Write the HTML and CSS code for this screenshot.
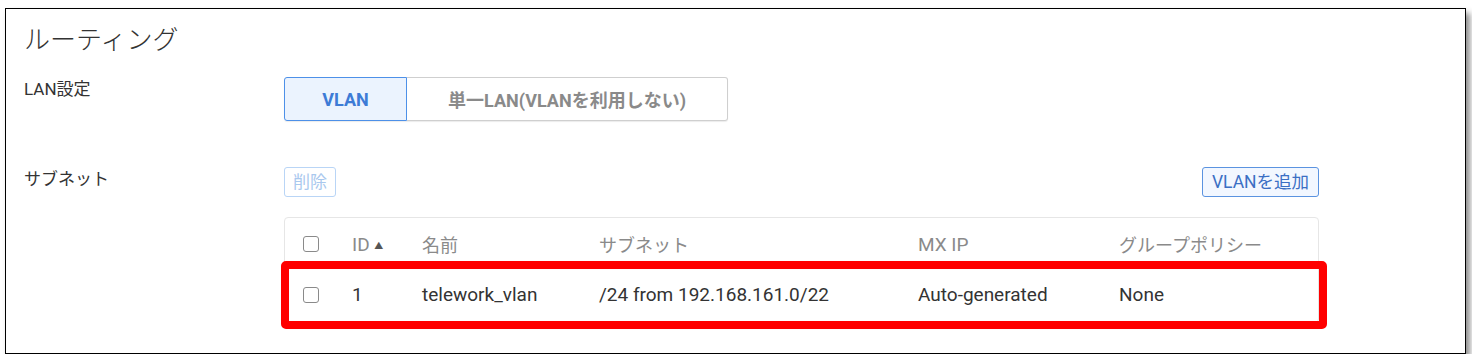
FILE: index.html
```html
<!DOCTYPE html>
<html lang="ja">
<head>
<meta charset="utf-8">
<title>ルーティング</title>
<link rel="stylesheet" href="styles.css">
</head>
<body>
<div class="frame">
  <h1 class="title">ルーティング</h1>
  <div class="form">
    <div class="label">LAN設定</div>
    <div class="field">
      <div class="toggle">
        <button class="seg seg-active">VLAN</button>
        <button class="seg seg-off">単一LAN(VLANを利用しない)</button>
      </div>
    </div>

    <div class="label label-subnet">サブネット</div>
    <div class="field field-subnet">
      <div class="actions">
        <button class="btn btn-disabled">削除</button>
        <button class="btn btn-add">VLANを追加</button>
      </div>
      <div class="table">
        <div class="row head">
          <span class="cb"></span>
          <span>ID <span class="sort">▲</span></span>
          <span class="jp">名前</span>
          <span class="jp">サブネット</span>
          <span>MX IP</span>
          <span class="jp">グループポリシー</span>
        </div>
        <div class="row data">
          <span class="cb"></span>
          <span>1</span>
          <span>telework_vlan</span>
          <span>/24 from 192.168.161.0/22</span>
          <span>Auto-generated</span>
          <span>None</span>
        </div>
        <div class="highlight"></div>
      </div>
    </div>
  </div>
</div>
</body>
</html>
```

FILE: styles.css
```css
* { box-sizing: border-box; }

html, body {
  margin: 0;
  padding: 0;
  background: #ffffff;
}

body {
  font-family: "Roboto", "Noto Sans CJK JP", sans-serif;
  color: #333333;
}

.frame {
  margin: 8px 0 0 5px;
  width: 1461px;
  height: 346px;
  border: 1px solid #000000;
  background: #ffffff;
  box-shadow: 4px 5px 6px rgba(0, 0, 0, 0.45);
  padding: 11px 0 0 18px;
}

.title {
  margin: 0;
  font-family: "Noto Sans CJK JP", sans-serif;
  font-weight: 300;
  font-size: 26px;
  line-height: 36px;
  color: #333333;
}

.form {
  margin-top: 21px;
  display: grid;
  grid-template-columns: 260px 1035px;
  row-gap: 46px;
}

.label {
  font-size: 17px;
  line-height: 24px;
  color: #333333;
}

.label-subnet {
  margin-top: 0;
}

.toggle {
  display: inline-flex;
  height: 44px;
  border-radius: 3px;
  box-shadow: 0 1px 1px rgba(0, 0, 0, 0.08);
}

.seg {
  font-family: "Roboto", "Noto Sans CJK JP", sans-serif;
  font-weight: 700;
  font-size: 18px;
  height: 44px;
  margin: 0;
  cursor: pointer;
}

.seg-active {
  width: 123px;
  background: #ebf3fe;
  border: 1.5px solid #4d90e8;
  border-radius: 3px 0 0 3px;
  color: #3d7bd6;
}

.seg-off {
  width: 321px;
  background: #ffffff;
  border: 1px solid #cfcfcf;
  border-left: none;
  border-radius: 0 3px 3px 0;
  color: #8a8a8a;
}

.actions {
  display: flex;
  justify-content: space-between;
  height: 30px;
}

.btn {
  font-family: "Roboto", "Noto Sans CJK JP", sans-serif;
  font-size: 17px;
  height: 30px;
  padding: 0 6px;
  border-radius: 3px;
  line-height: 26px;
}

.btn-disabled {
  width: 52px;
  background: #ffffff;
  border: 1px solid #b9d5f6;
  color: #a9c8ee;
}

.btn-add {
  width: 117px;
  background: #f2f7ff;
  border: 1px solid #5b93e0;
  color: #3b6fc4;
  font-size: 17.5px;
}

.table {
  position: relative;
  margin-top: 20px;
  border: 1px solid #e6e6e6;
  border-radius: 4px;
}

.row {
  display: grid;
  grid-template-columns: 49px 70px 177px 319px 201px 1fr;
  align-items: center;
  height: 52px;
  padding-left: 18px;
  font-size: 19px;
}

.head {
  color: #8a8a8a;
}

.head .jp {
  font-size: 18px;
}

.data {
  color: #333333;
  padding-bottom: 3px;
}

.cb {
  display: block;
  width: 16px;
  height: 16px;
  border: 1.5px solid #8a8a8a;
  border-radius: 3px;
  background: #ffffff;
}

.data .cb {
  margin-top: 1px;
}

.sort {
  font-size: 9px;
  color: #555555;
  vertical-align: 2px;
}

.highlight {
  position: absolute;
  left: -4px;
  top: 43px;
  width: 1046px;
  height: 68px;
  border: 8px solid #ff0000;
  border-radius: 5px;
  pointer-events: none;
}
```
